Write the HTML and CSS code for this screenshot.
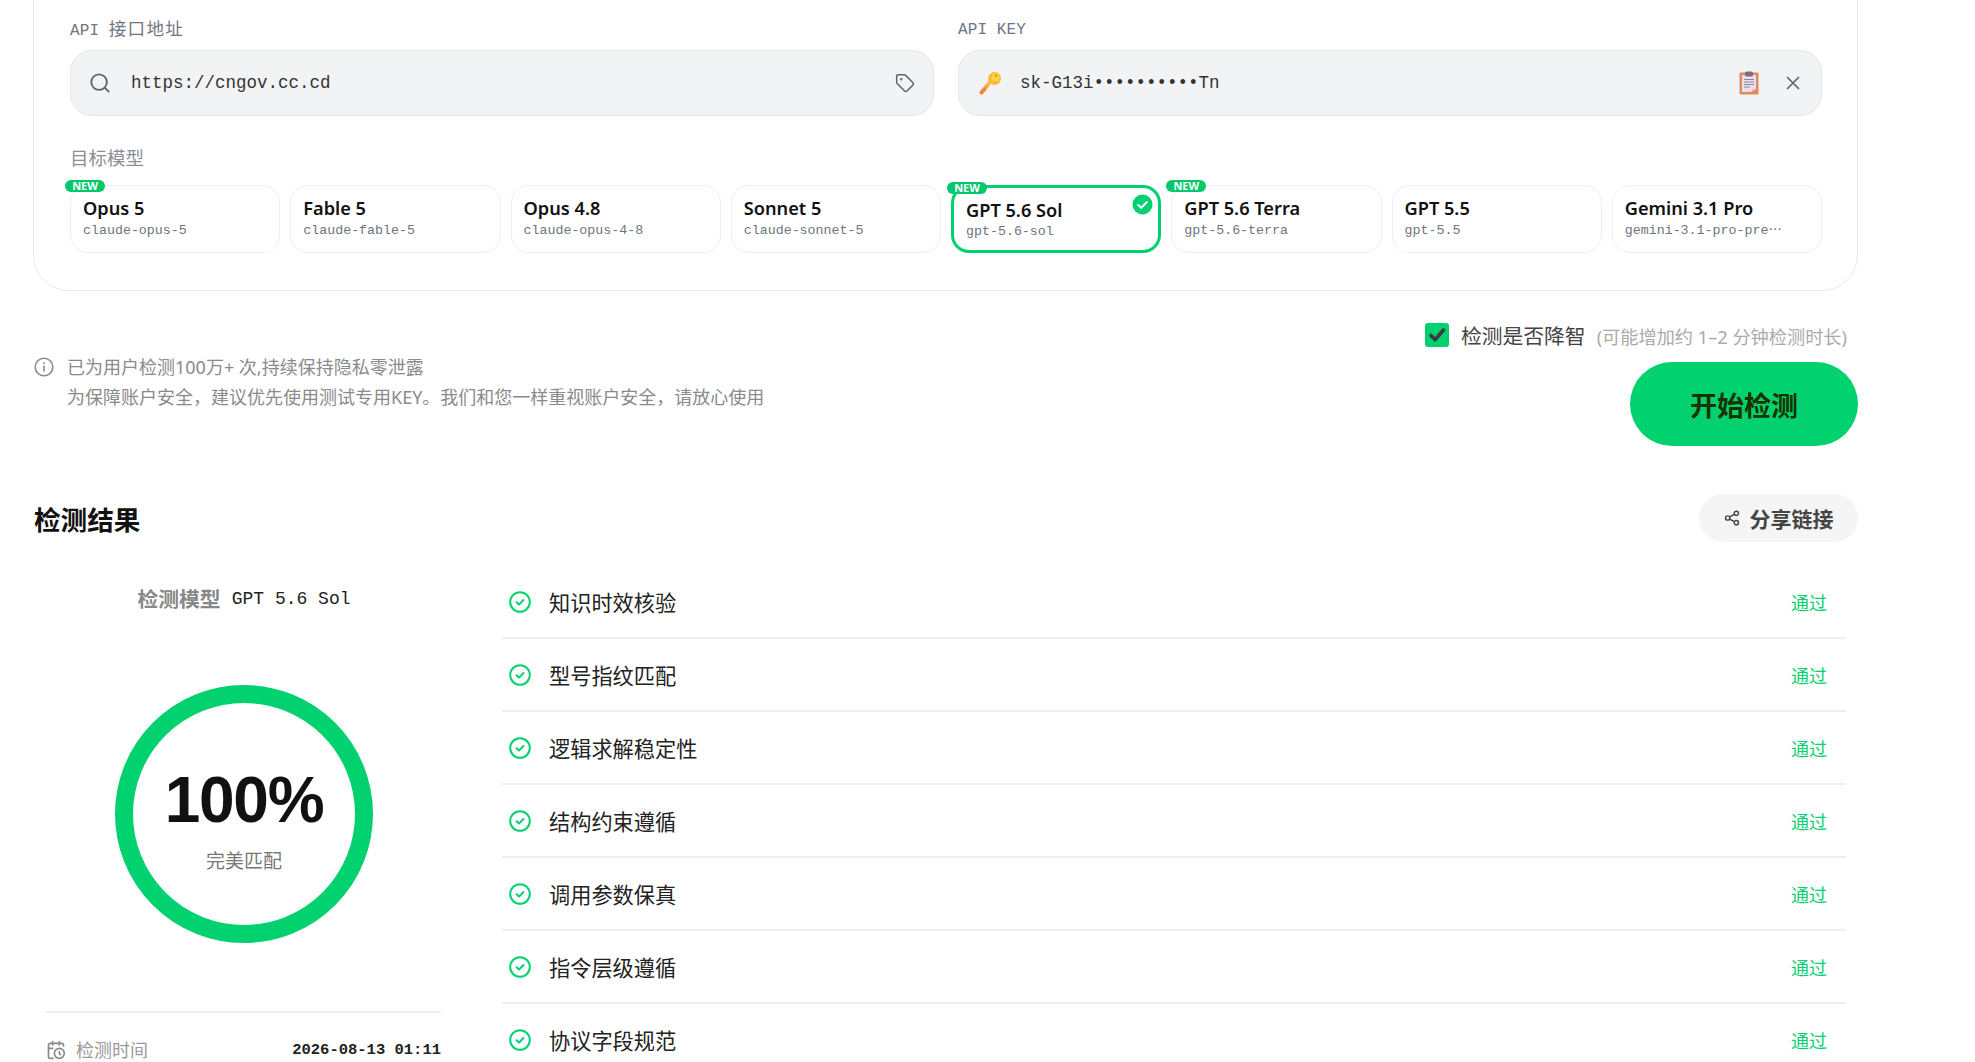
FILE: index.html
```html
<!DOCTYPE html>
<html lang="zh-CN">
<head>
<meta charset="utf-8">
<title>检测结果</title>
<link rel="stylesheet" href="styles.css">
</head>
<body>
<svg class="defs" width="0" height="0" aria-hidden="true">
  <symbol id="ok" viewBox="0 0 22 22"><circle cx="11" cy="11" r="9.8" fill="none" stroke="currentColor" stroke-width="2"/><path d="M7.6 11.2l2.4 2.4 4.4-4.6" fill="none" stroke="currentColor" stroke-width="2" stroke-linecap="round" stroke-linejoin="round"/></symbol>
</svg>
<main class="page">
  <section class="card">
    <div class="fields">
      <div class="field">
        <div class="label mono">API <span class="cjk">接口地址</span></div>
        <div class="input">
          <svg class="icon-search" viewBox="0 0 24 24" fill="none" stroke="currentColor" stroke-width="2" stroke-linecap="round"><circle cx="11" cy="11" r="8.5"/><path d="M21.5 21.5l-4.4-4.4"/></svg>
          <span class="input-text">https://cngov.cc.cd</span>
          <svg class="icon-tag" viewBox="0 0 24 24" fill="none" stroke="currentColor" stroke-width="1.8" stroke-linejoin="round"><path d="M12.586 2.586A2 2 0 0 0 11.172 2H4a2 2 0 0 0-2 2v7.172a2 2 0 0 0 .586 1.414l8.704 8.704a2.426 2.426 0 0 0 3.42 0l6.58-6.58a2.426 2.426 0 0 0 0-3.42z"/><circle cx="7.5" cy="7.5" r=".6" fill="currentColor"/></svg>
        </div>
      </div>
      <div class="field">
        <div class="label mono">API KEY</div>
        <div class="input">
          <svg class="icon-key" viewBox="0 0 24 24"><defs><linearGradient id="kg" x1="0" y1="1" x2="1" y2="0"><stop offset="0" stop-color="#f57f45"/><stop offset=".6" stop-color="#fbae3c"/><stop offset="1" stop-color="#fdd13f"/></linearGradient></defs><path d="M2.5 21.5l9-11" stroke="url(#kg)" stroke-width="4" stroke-linecap="round" fill="none"/><path d="M5.5 21l-2-1.6 2-2.2 2 1.6z" fill="#f57f45"/><circle cx="15.5" cy="7.5" r="6.5" fill="#fcb93d"/><circle cx="16.5" cy="6.5" r="3.8" fill="#ffd84a"/><circle cx="17" cy="5" r="1.4" fill="#e39a2c"/></svg>
          <span class="input-text">sk-G13i••••••••••Tn</span>
          <svg class="icon-clip" viewBox="0 0 20 24"><rect x="0.5" y="1.5" width="19" height="22" rx="1" fill="#e08c5a"/><path d="M3 4h14v14l-5 3H3z" fill="#e9dff0"/><path d="M12 21l5-3h-4z" fill="#f4c39d"/><rect x="6" y="0.5" width="8" height="5" rx="1.5" fill="#77707c"/><path d="M5 8.5h10M5 11h10M5 13.5h10M5 16h6" stroke="#8d8795" stroke-width="1"/></svg>
          <svg class="icon-x" viewBox="0 0 14 14" fill="none" stroke="currentColor" stroke-width="1.7" stroke-linecap="round"><path d="M1.5 1.5l11 11M12.5 1.5l-11 11"/></svg>
        </div>
      </div>
    </div>
    <div class="label-model">目标模型</div>
    <div class="models">
      <div class="model"><span class="new">NEW</span><div class="name">Opus 5</div><div class="id">claude-opus-5</div></div>
      <div class="model"><div class="name">Fable 5</div><div class="id">claude-fable-5</div></div>
      <div class="model"><div class="name">Opus 4.8</div><div class="id">claude-opus-4-8</div></div>
      <div class="model"><div class="name">Sonnet 5</div><div class="id">claude-sonnet-5</div></div>
      <div class="model selected"><span class="new">NEW</span>
        <svg class="tick" viewBox="0 0 22 22"><circle cx="11" cy="11" r="10.5" fill="#02d16f"/><path d="M6.5 11.5l3.2 3 5.8-6" fill="none" stroke="#fff" stroke-width="2.2" stroke-linecap="round" stroke-linejoin="round"/></svg>
        <div class="name">GPT 5.6 Sol</div><div class="id">gpt-5.6-sol</div></div>
      <div class="model"><span class="new">NEW</span><div class="name">GPT 5.6 Terra</div><div class="id">gpt-5.6-terra</div></div>
      <div class="model"><div class="name">GPT 5.5</div><div class="id">gpt-5.5</div></div>
      <div class="model"><div class="name">Gemini 3.1 Pro</div><div class="id">gemini-3.1-pro-pre⋯</div></div>
    </div>
  </section>

  <section class="actions">
    <div class="note">
      <svg class="icon-info" viewBox="0 0 20 20" fill="none" stroke="currentColor" stroke-width="1.6" stroke-linecap="round"><circle cx="10" cy="10" r="8.8"/><path d="M10 9.4v4.6"/><path d="M10 6.2v.1" stroke-width="2"/></svg>
      <div class="note-text">
        <p>已为用户检测100万+ 次,持续保持隐私零泄露</p>
        <p>为保障账户安全，建议优先使用测试专用KEY。我们和您一样重视账户安全，请放心使用</p>
      </div>
    </div>
    <div class="cta">
      <div class="opt">
        <span class="box"><svg viewBox="0 0 24 24" fill="none" stroke="#3b3b40" stroke-width="3.6" stroke-linecap="round" stroke-linejoin="round"><path d="M6 12.5l4.2 4.2L18.5 7"/></svg></span>
        <span class="opt-main">检测是否降智</span>
        <span class="opt-hint">(可能增加约 1–2 分钟检测时长)</span>
      </div>
      <button class="start">开始检测</button>
    </div>
  </section>

  <header class="results-head">
    <h2>检测结果</h2>
    <button class="share">
      <svg viewBox="0 0 24 24" fill="none" stroke="currentColor" stroke-width="2.2"><circle cx="18.5" cy="5" r="3.2"/><circle cx="5.5" cy="12" r="3.2"/><circle cx="18.5" cy="19" r="3.2"/><path d="M8.4 10.4l7.3-3.9M8.4 13.6l7.3 3.9"/></svg>
      分享链接
    </button>
  </header>

  <section class="results">
    <aside class="panel">
      <div class="panel-title"><b>检测模型</b> <span class="mono">GPT 5.6 Sol</span></div>
      <div class="ring">
        <div class="pct">100%</div>
        <div class="pct-sub">完美匹配</div>
      </div>
      <div class="meta">
        <span class="meta-key">
          <svg viewBox="0 0 24 24" fill="none" stroke="currentColor" stroke-width="2" stroke-linecap="round" stroke-linejoin="round"><path d="M21 7.5V6a2 2 0 0 0-2-2H5a2 2 0 0 0-2 2v14a2 2 0 0 0 2 2h3.5"/><path d="M16 2v4"/><path d="M8 2v4"/><path d="M3 10h5"/><path d="M17.5 17.5 16 16.3V14"/><circle cx="16" cy="16" r="6"/></svg>
          检测时间</span>
        <span class="meta-val">2026-08-13 01:11</span>
      </div>
    </aside>
    <ul class="checks">
      <li><svg class="ok"><use href="#ok"/></svg><span class="check-name">知识时效核验</span><span class="pass">通过</span></li>
      <li><svg class="ok"><use href="#ok"/></svg><span class="check-name">型号指纹匹配</span><span class="pass">通过</span></li>
      <li><svg class="ok"><use href="#ok"/></svg><span class="check-name">逻辑求解稳定性</span><span class="pass">通过</span></li>
      <li><svg class="ok"><use href="#ok"/></svg><span class="check-name">结构约束遵循</span><span class="pass">通过</span></li>
      <li><svg class="ok"><use href="#ok"/></svg><span class="check-name">调用参数保真</span><span class="pass">通过</span></li>
      <li><svg class="ok"><use href="#ok"/></svg><span class="check-name">指令层级遵循</span><span class="pass">通过</span></li>
      <li><svg class="ok"><use href="#ok"/></svg><span class="check-name">协议字段规范</span><span class="pass">通过</span></li>
    </ul>
  </section>
</main>
</body>
</html>
```

FILE: styles.css
```css
* { box-sizing: border-box; }
html, body { margin: 0; height: 1062px; overflow: hidden; background: #fff; }
body { font-family: "Noto Sans", "Noto Sans CJK SC", sans-serif; color: #222; }
p, h2, ul { margin: 0; padding: 0; }
.defs { position: absolute; }
.mono { font-family: "Liberation Mono", "Noto Sans CJK SC", monospace; }

.page { width: 1825px; margin-left: 33px; }

.card {
  margin-top: -40px;
  height: 331px;
  padding: 56.5px 35px 0 36px;
  border: 1.5px solid #e8e9ea;
  border-radius: 36px;
}
.fields { display: grid; grid-template-columns: 1fr 1fr; gap: 24px; }
.label { height: 24px; font-size: 16px; line-height: 24px; letter-spacing: .1px; color: #6f7680; }
.label .cjk { font-size: 17.6px; letter-spacing: 1.2px; }
.input {
  display: flex; align-items: center;
  height: 66px; margin-top: 8px; padding: 0 21px 0 18px;
  background: #f2f3f5; border: 1.5px solid #e4e6e9; border-radius: 22px;
  color: #5d6670;
}
.input-text { flex: 1; font-family: "Liberation Mono", monospace; font-size: 17.5px; color: #333; }
.icon-search { width: 22px; height: 22px; margin-right: 20px; }
.icon-tag { width: 20px; height: 20px; margin-right: -3px; }
.icon-key { width: 24px; height: 24px; margin-right: 17px; margin-left: 2px; }
.icon-clip { width: 20px; height: 24px; margin-right: 27px; }
.icon-x { width: 14px; height: 14px; }

.label-model { margin-top: 29px; height: 26px; font-size: 18.5px; line-height: 26px; color: #8b9098; }
.models { display: grid; grid-template-columns: repeat(8, 1fr); gap: 10px; margin-top: 14px; }
.model {
  position: relative; height: 68px; padding: 9px 12px 0;
  border: 1.5px solid #eeeff0; border-radius: 18px; background: #fff;
}
.model.selected { border: 3px solid #02d16f; padding: 9.5px 12px 0; }
.name { font-size: 18.2px; font-weight: 600; line-height: 26px; color: #111; white-space: nowrap; }
.id { font-family: "Liberation Mono", "Noto Sans CJK SC", monospace; font-size: 13.3px; line-height: 18px; margin-top: 1px; color: #6d7580; white-space: nowrap; }
.selected .id { margin-top: 0; }
.new {
  position: absolute; left: -6px; top: -6px;
  width: 40px; height: 12px; border-radius: 6px;
  background: #02c86b; color: #fff;
  font-size: 11px; font-weight: 700; line-height: 12px; text-align: center;
}
.selected .new { left: -7px; top: -6px; }
.tick { position: absolute; right: 5px; top: 6px; width: 21px; height: 21px; }

.actions { display: flex; justify-content: space-between; align-items: center; margin-top: 32px; }
.note { display: flex; gap: 13px; margin-bottom: 6px; color: #8a8a8a; font-size: 18px; line-height: 30px; }
.icon-info { flex: none; width: 20px; height: 20px; margin: 5px 0 0 1px; }
.cta { display: flex; flex-direction: column; align-items: flex-end; }
.opt { display: flex; align-items: center; height: 24px; margin-right: 11px; }
.box { display: flex; width: 24px; height: 24px; border-radius: 3px; background: #02d16f; }
.box svg { width: 24px; height: 24px; }
.opt-main { margin-left: 12px; font-size: 20.8px; color: #444; }
.opt-hint { margin-left: 11px; font-size: 18.2px; color: #aaa; position: relative; top: 1px; }
.start {
  width: 228px; height: 84px; margin-top: 15px; border: 0; border-radius: 42px;
  background: #02d16f; color: #1a3300;
  font-family: inherit; font-size: 27px; font-weight: 700;
}

.results-head { display: flex; justify-content: space-between; align-items: center; margin-top: 48px; }
h2 { font-size: 26.6px; font-weight: 700; color: #111; padding-left: 1px; }
.share {
  display: flex; align-items: center; justify-content: center; gap: 10px;
  width: 159px; height: 48px; border: 0; border-radius: 24px;
  background: #f4f5f4; color: #444;
  font-family: inherit; font-size: 21px; font-weight: 700;
}
.share svg { width: 16px; height: 16px; }

.results { display: grid; grid-template-columns: 420px 1fr; gap: 49px; margin-top: 24px; }
.panel { padding: 17px 12px 0; }
.panel-title { display: flex; justify-content: center; align-items: center; gap: 11px; height: 30px; padding-left: 2px; }
.panel-title b { font-size: 20.8px; color: #888; }
.panel-title .mono { font-size: 18px; color: #222; position: relative; top: 1px; }
.ring {
  display: flex; flex-direction: column; align-items: center; justify-content: center;
  width: 258px; height: 258px; margin: 72px 0 0 70px; padding-top: 12.5px;
  border: 18px solid #02d16f; border-radius: 50%;
}
.pct { font-family: "Liberation Sans", sans-serif; font-size: 64px; font-weight: 700; letter-spacing: -1.3px; line-height: 72px; color: #111; }
.pct-sub { margin-top: 10px; font-size: 19px; line-height: 30px; color: #777; }
.meta { display: flex; justify-content: space-between; align-items: center; margin-top: 68px; padding-top: 22px; border-top: 2px solid #eeeeee; }
.meta-key { display: flex; align-items: center; gap: 10px; padding-left: 1px; font-size: 18px; color: #999; line-height: 30px; }
.meta-key svg { width: 20px; height: 20px; color: #8a8a8a; }
.meta-val { font-family: "Liberation Mono", monospace; font-size: 15.5px; font-weight: 700; color: #222; }

.checks { list-style: none; margin-right: 12px; }
.checks li { display: flex; align-items: center; height: 73px; padding: 0 19px 0 7px; border-bottom: 2px solid #efefef; }
.ok { width: 22px; height: 22px; color: #02d16f; flex: none; }
.check-name { flex: 1; margin-left: 18px; font-size: 21.2px; color: #222; }
.pass { font-size: 18px; color: #0ad072; }
```
